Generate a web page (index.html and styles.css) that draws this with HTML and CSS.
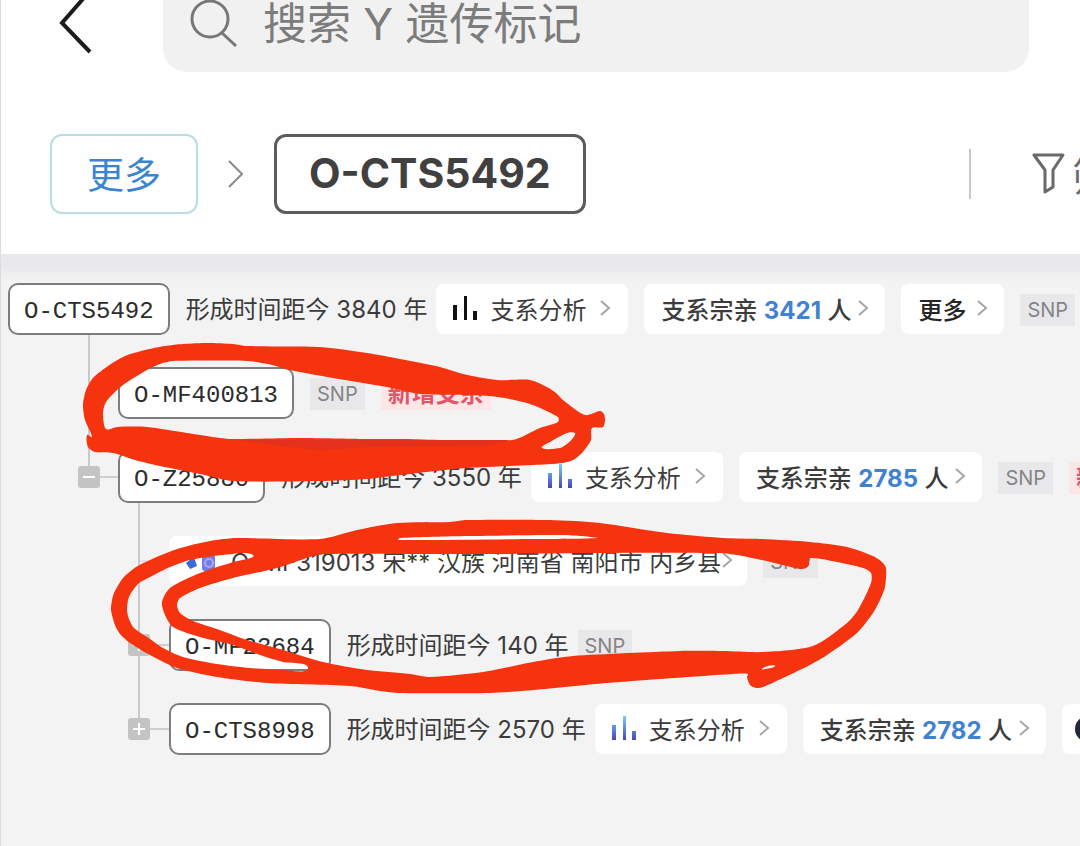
FILE: index.html
```html
<!DOCTYPE html>
<html lang="zh-CN">
<head>
<meta charset="utf-8">
<title>O-CTS5492</title>
<link rel="stylesheet" href="styles.css">
</head>
<body>
<svg class="defs" aria-hidden="true">
  <defs>
    <linearGradient id="bar" x1="0" y1="0" x2="0" y2="1">
      <stop offset="0" stop-color="#74cdf2"/><stop offset="0.55" stop-color="#5a86dc"/><stop offset="1" stop-color="#4a45b5"/>
    </linearGradient>
    <symbol id="chev" viewBox="0 0 12 20"><path d="M2 3 10 10 2 17" fill="none" stroke="#a6a6a6" stroke-width="2"/></symbol>
    <symbol id="bars" viewBox="0 0 26 26"><path d="M1 10h4v15H1zM12 1h3v24h-3zM21 16h4v9h-4z"/></symbol>
  </defs>
</svg>
<div class="page">
  <header class="header">
    <div class="search-row">
      <button class="back" aria-label="返回"><svg width="42" height="64" viewBox="0 0 42 64"><path d="M36 0 9 31 37 60" fill="none" stroke="#1c1c1c" stroke-width="4"/></svg></button>
      <label class="search">
        <svg width="50" height="50" viewBox="0 0 50 50"><ellipse cx="21" cy="20" rx="18" ry="18" fill="none" stroke="#777" stroke-width="3"/><path d="M33 34 47 47" stroke="#777" stroke-width="3"/></svg>
        <input type="text" placeholder="搜索 Y 遗传标记" aria-label="搜索 Y 遗传标记">
      </label>
    </div>
    <nav class="crumbs">
      <button class="crumb crumb-more">更多</button>
      <svg class="crumb-sep" width="16" height="32" viewBox="0 0 16 32"><path d="M1 3 14 16 1 29" fill="none" stroke="#8a8a8a" stroke-width="2"/></svg>
      <button class="crumb crumb-current">O-CTS5492</button>
      <button class="filter">
        <svg width="34" height="44" viewBox="0 0 34 44"><path d="M2 3H31L21 18V35L13 40V18Z" fill="none" stroke="#6a6a6a" stroke-width="3" stroke-linejoin="round"/></svg>
        <span>筛选</span>
      </button>
    </nav>
  </header>

  <main class="tree">
    <div class="row root">
      <button class="node">O-CTS5492</button>
      <span class="age">形成时间距今 3840 年</span>
      <button class="pill thin"><svg class="bars dark"><use href="#bars"/></svg>支系分析<svg class="chev"><use href="#chev"/></svg></button>
      <button class="pill"><span>支系宗亲 <b>3421</b> 人</span><svg class="chev near"><use href="#chev"/></svg></button>
      <button class="pill strong">更多<svg class="chev mid"><use href="#chev"/></svg></button>
      <span class="tag">SNP</span>
    </div>
    <div class="row level1">
      <div class="guide"></div>
      <button class="node">O-MF400813</button>
      <span class="tag">SNP</span>
      <span class="tag new">新增支系</span>
    </div>
    <div class="row level1">
      <div class="guide last"><button class="toggle" aria-label="收起"><svg width="22" height="22"><path d="M5 11H17" stroke="#fff" stroke-width="2"/></svg></button><i class="branch"></i></div>
      <button class="node">O-Z25880</button>
      <span class="age">形成时间距今 3550 年</span>
      <button class="pill thin"><svg class="bars" viewBox="0 0 26 26"><path fill="url(#bar)" d="M1 10h4v15H1zM12 1h3v24h-3zM21 16h4v9h-4z"/></svg>支系分析<svg class="chev"><use href="#chev"/></svg></button>
      <button class="pill"><span>支系宗亲 <b>2785</b> 人</span><svg class="chev near"><use href="#chev"/></svg></button>
      <span class="tag">SNP</span>
      <span class="tag new">新增支系</span>
    </div>
    <div class="row level2">
      <div class="guide"><i class="branch pale"></i></div>
      <button class="pill thin person"><svg width="34" height="26" viewBox="0 0 34 26"><path d="M3 16 11 10 14 19 7 22Z" fill="#3c67dc"/><rect x="19" y="8" width="13" height="16" rx="3" fill="#6d7fe4"/><circle cx="26" cy="16" r="4" fill="none" stroke="#b5a4f4" stroke-width="2"/></svg><span>O-MF319013 宋** 汉族 河南省 南阳市 内乡县</span><svg class="chev"><use href="#chev"/></svg></button>
      <span class="tag">SNP</span>
    </div>
    <div class="row level2">
      <div class="guide"><button class="toggle" aria-label="展开"><svg width="22" height="22"><path d="M5 11H17M11 5V17" stroke="#fff" stroke-width="2"/></svg></button><i class="branch"></i></div>
      <button class="node">O-MF23684</button>
      <span class="age">形成时间距今 140 年</span>
      <span class="tag">SNP</span>
    </div>
    <div class="row level2">
      <div class="guide last"><button class="toggle" aria-label="展开"><svg width="22" height="22"><path d="M5 11H17M11 5V17" stroke="#fff" stroke-width="2"/></svg></button><i class="branch"></i></div>
      <button class="node">O-CTS8998</button>
      <span class="age">形成时间距今 2570 年</span>
      <button class="pill thin"><svg class="bars" viewBox="0 0 26 26"><path fill="url(#bar)" d="M1 10h4v15H1zM12 1h3v24h-3zM21 16h4v9h-4z"/></svg>支系分析<svg class="chev"><use href="#chev"/></svg></button>
      <button class="pill"><span>支系宗亲 <b>2782</b> 人</span><svg class="chev near"><use href="#chev"/></svg></button>
      <button class="pill avatar" aria-label="宗亲"><svg width="26" height="26"><circle cx="13" cy="13" r="13" fill="#22283c"/></svg></button>
    </div>
  </main>

  <svg class="marker" width="900" height="700" viewBox="0 0 900 700" aria-hidden="true">
    <g fill="#f6330f" fill-rule="evenodd">
      <path class="smooth" d="M83 405 86 390 93 378 108 366 125 356 145 350 165 346 183 344 208 343 233 344 247 346 320 347 367 353 400 359 440 367 463 374 497 380 530 380 547 387 556 393 563 400 585 415 600 411 604 414 605 420 603 427 592 428 591 440 582 453 573 460 563 463 533 465 467 468 400 475 367 479 320 481 233 481 200 474 160 466 135 460 113 453 95 452 88 447 87 435 92 437 85 420Z
      M106 429 103 413 105 404 110 397 123 385 147 370 160 364 173 361 247 361 268 364 290 370 333 378 387 387 420 394 490 396 527 403 558 417 558 422 540 428 512 440 400 439 367 439 300 438 233 439 220 438 187 433 147 427 117 427Z
      M542 448 550 442 567 433 575 433 573 438 567 444 560 448Z"/>
      <path class="smooth" d="M111 610 112 600 114 593 123 578 136 567 150 560 177 549 210 541 237 538 320 539 357 530 397 523 450 522 467 520 550 520 600 523 667 533 723 538 760 539 810 542 847 547 873 556 882 562 886 568 885 587 880 600 873 613 857 633 827 655 810 665 783 678 763 687 756 688 750 685 747 677 748 674 733 674 607 683 533 690 490 693 400 693 380 691 350 686 267 683 217 677 177 668 150 655 130 643 120 634 115 625Z
      M127 610 129 597 138 584 150 577 170 567 190 560 223 555 253 555 233 562 200 573 170 588 162 602 165 615 173 627 200 637 233 645 260 655 283 662 308 668 283 670 250 668 217 664 183 657 163 648 150 639 134 628 129 619Z
      M177 605 180 598 200 588 233 578 277 568 310 557 327 554 450 554 720 553 757 559 800 569 806 568 809 565 810 558 837 562 863 568 871 573 871 583 858 610 847 623 813 646 763 652 723 651 680 651 573 656 533 662 483 672 430 677 410 674 367 670 323 662 283 650 247 640 217 629 193 621 180 613Z
      M398 540 400 538 467 536 560 535 580 536 597 538 533 539Z
      M762 669 768 666 775 666 766 669Z"/>
    </g>
    <path d="M238 440 510 440 488 446 370 447 320 450 290 447Z" fill="#e4311b"/>
  </svg>
</div>
<script src="marker.js"></script>
</body>
</html>
```

FILE: marker.js
```js
// Rounds the hand-drawn loops: each polygon becomes a closed curve through its points.
document.querySelectorAll('.smooth').forEach(function (path) {
  var loops = path.getAttribute('d').split('Z').filter(function (s) { return s.trim(); });
  path.setAttribute('d', loops.map(function (loop) {
    var n = loop.match(/\d+/g).map(Number), p = [];
    for (var i = 0; i < n.length; i += 2) p.push([n[i], n[i + 1]]);
    var out = 'M' + p[0];
    p.forEach(function (b, k) {
      var len = p.length;
      var a = p[(k + len - 1) % len], c = p[(k + 1) % len], d = p[(k + 2) % len];
      var span = Math.hypot(c[0] - b[0], c[1] - b[1]);
      // Handle length follows the segment, so long and short runs join without loops.
      function handle(from, to, at, sign) {
        var dx = to[0] - from[0], dy = to[1] - from[1], m = Math.hypot(dx, dy) || 1;
        return [at[0] + sign * dx / m * span / 4, at[1] + sign * dy / m * span / 4];
      }
      out += 'C' + handle(a, c, b, 1) + ' ' + handle(b, d, c, -1) + ' ' + c;
    });
    return out + 'Z';
  }).join(''));
});
```

FILE: styles.css
```css
* { box-sizing: border-box; }

body {
  margin: 0;
  background: #f3f3f3;
  color: #3c3c3c;
  font-family: Inter, "Noto Sans CJK SC", sans-serif;
  font-size: 24px;
}

button {
  margin: 0;
  padding: 0;
  border: 0;
  background: none;
  color: inherit;
  font: inherit;
  white-space: nowrap;
}

svg { display: block; flex: none; }

.defs { position: absolute; width: 0; height: 0; }

.page {
  position: relative;
  min-height: 100vh;
  overflow: hidden;
  border-left: 1px solid #dcdcdc;
}

.header {
  background: #fefefe;
  padding-bottom: 40px;
}

.search-row {
  display: flex;
  align-items: center;
  margin-top: -24px;
  padding: 0 51px 0 52px;
}

.back { flex: 0 0 110px; }

.search {
  display: flex;
  flex: 1;
  align-items: center;
  gap: 24px;
  height: 96px;
  padding: 0 26px;
  border-radius: 24px;
  background: #f1f1f1;
}

.search input {
  flex: 1;
  min-width: 0;
  padding: 0;
  border: 0;
  outline: 0;
  background: none;
  color: #7c7c7c;
  font: 44px Inter, "Noto Sans CJK SC", sans-serif;
}

.search input::placeholder { color: #7c7c7c; opacity: 1; }

.crumbs {
  display: flex;
  align-items: center;
  padding: 62px 0 0 49px;
}

.crumb {
  height: 80px;
  padding: 0 32px;
  border-radius: 12px;
}

.crumb-more {
  padding: 0 35px 2px;
  border: 2px solid #b9dde2;
  color: #3a84d0;
  font-size: 37px;
}

.crumb-sep { margin: 0 30px; }

.crumb-current {
  padding-bottom: 2px;
  border: 3px solid #5c5c5c;
  color: #404040;
  font-size: 41px;
  font-weight: 700;
}

.filter {
  display: flex;
  flex: 0 0 111px;
  align-items: center;
  gap: 6px;
  min-width: 0;
  height: 50px;
  margin-left: auto;
  padding-left: 61px;
  border-left: 2px solid #c8c8c8;
  color: #6a6a6a;
  font-size: 40px;
}

.tree {
  padding: 29px 0 32px 7px;
  background: linear-gradient(#e7e7ec, #e9e9ed 12px, #f3f3f3 28px);
}

.row {
  display: flex;
  align-items: flex-end;
  height: 84px;
  white-space: nowrap;
}

.row > * { flex: none; }
.root { height: 52px; }
.level1 { padding-left: 70px; }
.level2 { padding-left: 120px; }

.guide {
  display: flex;
  align-items: flex-end;
  width: 41px;
  height: 84px;
  padding-bottom: 15px;
  background: linear-gradient(#c9c9c9, #c9c9c9) 10px 0 / 2px 100% no-repeat;
}

.level1 .guide { width: 40px; }
.guide.last { background-size: 2px 52px; }

.toggle {
  width: 22px;
  height: 22px;
  border-radius: 3px;
  background: #c4c4c4;
}

.branch {
  flex: 1;
  height: 2px;
  margin-bottom: 10px;
  background: #cfcfcf;
}

.branch.pale {
  margin-left: 12px;
  background: #e2e0ee;
}

.node {
  height: 52px;
  margin-right: 16px;
  padding: 4px 14px 0;
  border: 2px solid #7d7d7d;
  border-radius: 10px;
  background: #fff;
  color: #2c2c2c;
  font-family: "Liberation Mono", monospace;
}

.age {
  margin-right: 9px;
  line-height: 50px;
}

.pill {
  display: flex;
  align-items: center;
  height: 50px;
  margin: 0 16px 1px 0;
  padding: 0 16px 2px 17px;
  border-radius: 8px;
  background: #fff;
  font-weight: 500;
}

.pill.thin {
  padding: 0 17px 2px 16px;
  font-weight: 400;
}

.pill.strong { color: #262626; }

.pill b {
  color: #3f82d4;
  font-weight: 700;
}

.bars {
  width: 26px;
  height: 26px;
  margin-right: 12px;
}

.bars.dark { fill: #111; }

.chev {
  width: 12px;
  height: 20px;
  margin-left: 13px;
}

.chev.near { margin-left: 6px; }
.chev.mid { margin-left: 10px; }

.pill.person { padding: 0 14px 2px; }
.person .chev { margin-left: 0; }
.person span { margin-left: 14px; }

.tag {
  height: 32px;
  margin: 0 16px 9px 0;
  padding: 0 7px;
  background: #e8e8ea;
  color: #858585;
  font-size: 20px;
  line-height: 32px;
}

.tag.new {
  background: #fde6e8;
  color: #e35566;
  font-size: 24px;
  font-weight: 700;
}

.pill.avatar { padding: 0 13px; }

.marker {
  position: absolute;
  top: 0;
  left: -1px;
  pointer-events: none;
}
```
